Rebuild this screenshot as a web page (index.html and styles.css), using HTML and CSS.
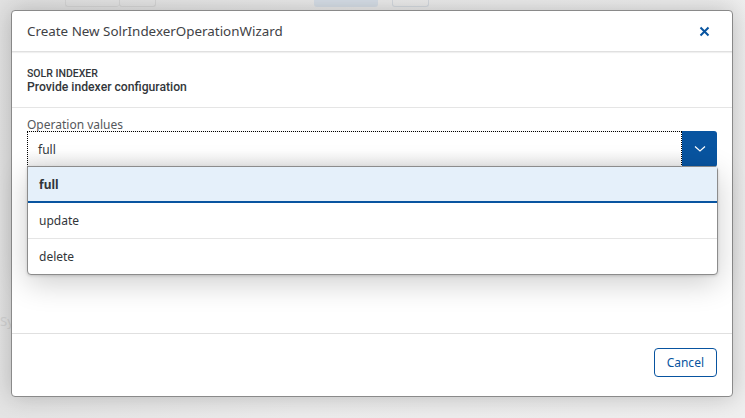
FILE: index.html
```html
<!DOCTYPE html>
<html lang="en">
  <head>
    <meta charset="utf-8" />
    <title>Create New SolrIndexerOperationWizard</title>
    <link rel="stylesheet" href="styles.css">
  </head>
  <body>
    <div class="page">
      <div class="toolbar">
        <div class="seg">
          <span class="seg-btn wide"></span>
          <span class="seg-btn"></span>
        </div>
        <span class="tb-btn active"></span>
        <span class="tb-btn small"></span>
      </div>
      <div class="page-text">Sy</div>
    </div>

    <div class="dialog">
      <div class="dialog-header">
        <span class="dialog-title">Create New SolrIndexerOperationWizard</span>
        <svg class="close" width="11" height="11" viewBox="0 0 11 11">
          <path d="M1.5 1.5 L9.5 9.5 M9.5 1.5 L1.5 9.5" stroke="#0854a0" stroke-width="2" fill="none"/>
        </svg>
      </div>

      <div class="subheader">
        <div class="step">SOLR INDEXER</div>
        <div class="step-title">Provide indexer configuration</div>
      </div>

      <div class="dialog-content">
        <label class="field-label">Operation values</label>
        <div class="combo">
          <div class="combo-input">full</div>
          <div class="combo-btn">
            <svg width="12" height="8" viewBox="0 0 12 8">
              <path d="M1 1.5 L6 6 L11 1.5" stroke="#fff" stroke-width="1.2" fill="none"/>
            </svg>
          </div>
        </div>

        <ul class="popover">
          <li class="item selected">full</li>
          <li class="item">update</li>
          <li class="item">delete</li>
        </ul>
      </div>

      <div class="dialog-footer">
        <button class="btn">Cancel</button>
      </div>
    </div>
  </body>
</html>
```

FILE: styles.css
```css
body {
  margin: 0;
  font-family: "Noto Sans", "Liberation Sans", sans-serif;
  background: linear-gradient(100deg, #e2e2e2 0%, #ececec 45%, #efefef 100%);
  height: 418px;
  overflow: hidden;
}

.page {
  position: relative;
  height: 418px;
}

.toolbar {
  display: flex;
  align-items: flex-end;
  height: 7px;
  padding-left: 65px;
}
.seg {
  display: flex;
}
.seg-btn {
  display: block;
  width: 35px;
  height: 10px;
  border: 1px solid #d7d7d7;
  border-top: 0;
  border-radius: 0 0 3px 3px;
}
.seg-btn.wide {
  width: 53px;
  border-right: 0;
}
.tb-btn {
  display: block;
  width: 64px;
  height: 10px;
  margin-left: 158px;
  border-radius: 0 0 3px 3px;
}
.tb-btn.active {
  background: #d7dfe8;
}
.tb-btn.small {
  width: 35px;
  margin-left: 14px;
  border: 1px solid #d5dae0;
  border-top: 0;
}

.page-text {
  position: absolute;
  left: 0;
  top: 312px;
  font-size: 13px;
  color: #d2d2d2;
}

/* the dialog floats over the page */
.dialog {
  position: absolute;
  left: 11px;
  top: 10px;
  width: 720px;
  height: 385px;
  background: #fff;
  border: 1px solid #8a8a8a;
  border-radius: 4px;
  box-shadow: 0 0 24px rgba(0, 0, 0, 0.22);
  display: flex;
  flex-direction: column;
}

.dialog-header {
  display: flex;
  align-items: center;
  justify-content: space-between;
  height: 40px;
  padding: 0 22px 0 15px;
  border-bottom: 1px solid #e0e0e0;
  box-shadow: 0 1px 1px rgba(0, 0, 0, 0.06);
}
.dialog-title {
  font-size: 13.4px;
  color: #3f4246;
}
.close {
  display: block;
}

.subheader {
  height: 55px;
  padding: 0 15px;
  display: flex;
  flex-direction: column;
  justify-content: center;
  border-bottom: 1px solid #e5e5e5;
  font-family: Roboto, "Noto Sans", sans-serif;
}
.step {
  font-size: 10.5px;
  font-weight: 500;
  color: #32363a;
  padding-top: 2px;
}
.step-title {
  font-size: 12.2px;
  font-weight: 500;
  color: #32363a;
}

.dialog-content {
  position: relative;
  flex: 1;
  padding: 8px 15px 0 15px;
}
.field-label {
  display: block;
  font-size: 12px;
  color: #55585c;
  height: 15px;
}
.combo {
  display: flex;
  height: 36px;
}
.combo-input {
  flex: 1;
  display: flex;
  align-items: center;
  padding-left: 10px;
  font-size: 12px;
  color: #32363a;
  border: 1px dotted #000;
  background: linear-gradient(180deg, #fff 0%, #fff 55%, #eeeeee 100%);
}
.combo-btn {
  width: 35px;
  display: flex;
  align-items: center;
  justify-content: center;
  background: #0854a0;
  border-radius: 0 3px 3px 0;
}

.popover {
  position: absolute;
  left: 15px;
  right: 14px;
  top: 58px;
  margin: 0;
  padding: 0;
  list-style: none;
  background: #fff;
  border: 1px solid #8c8c8c;
  border-radius: 0 4px 4px 4px;
  box-shadow: 0 8px 30px rgba(0, 0, 0, 0.2), 0 1px 3px rgba(0, 0, 0, 0.15);
}
.item {
  height: 35px;
  display: flex;
  align-items: center;
  padding-left: 11px;
  font-size: 12px;
  color: #32363a;
  border-bottom: 1px solid #e5e5e5;
}
.item:last-child {
  border-bottom: 0;
}
.item.selected {
  background: #e5f0fa;
  border-bottom: 2px solid #0854a0;
  height: 34px;
  font-weight: bold;
}

.dialog-footer {
  height: 63px;
  border-top: 1px solid #e0e0e0;
  display: flex;
  justify-content: flex-end;
  align-items: flex-start;
  padding: 14px 15px 0 0;
  box-sizing: border-box;
}
.btn {
  height: 29px;
  padding: 0 12px;
  font-family: inherit;
  font-size: 12px;
  color: #0854a0;
  background: #fff;
  border: 1px solid #0854a0;
  border-radius: 4px;
}
```
